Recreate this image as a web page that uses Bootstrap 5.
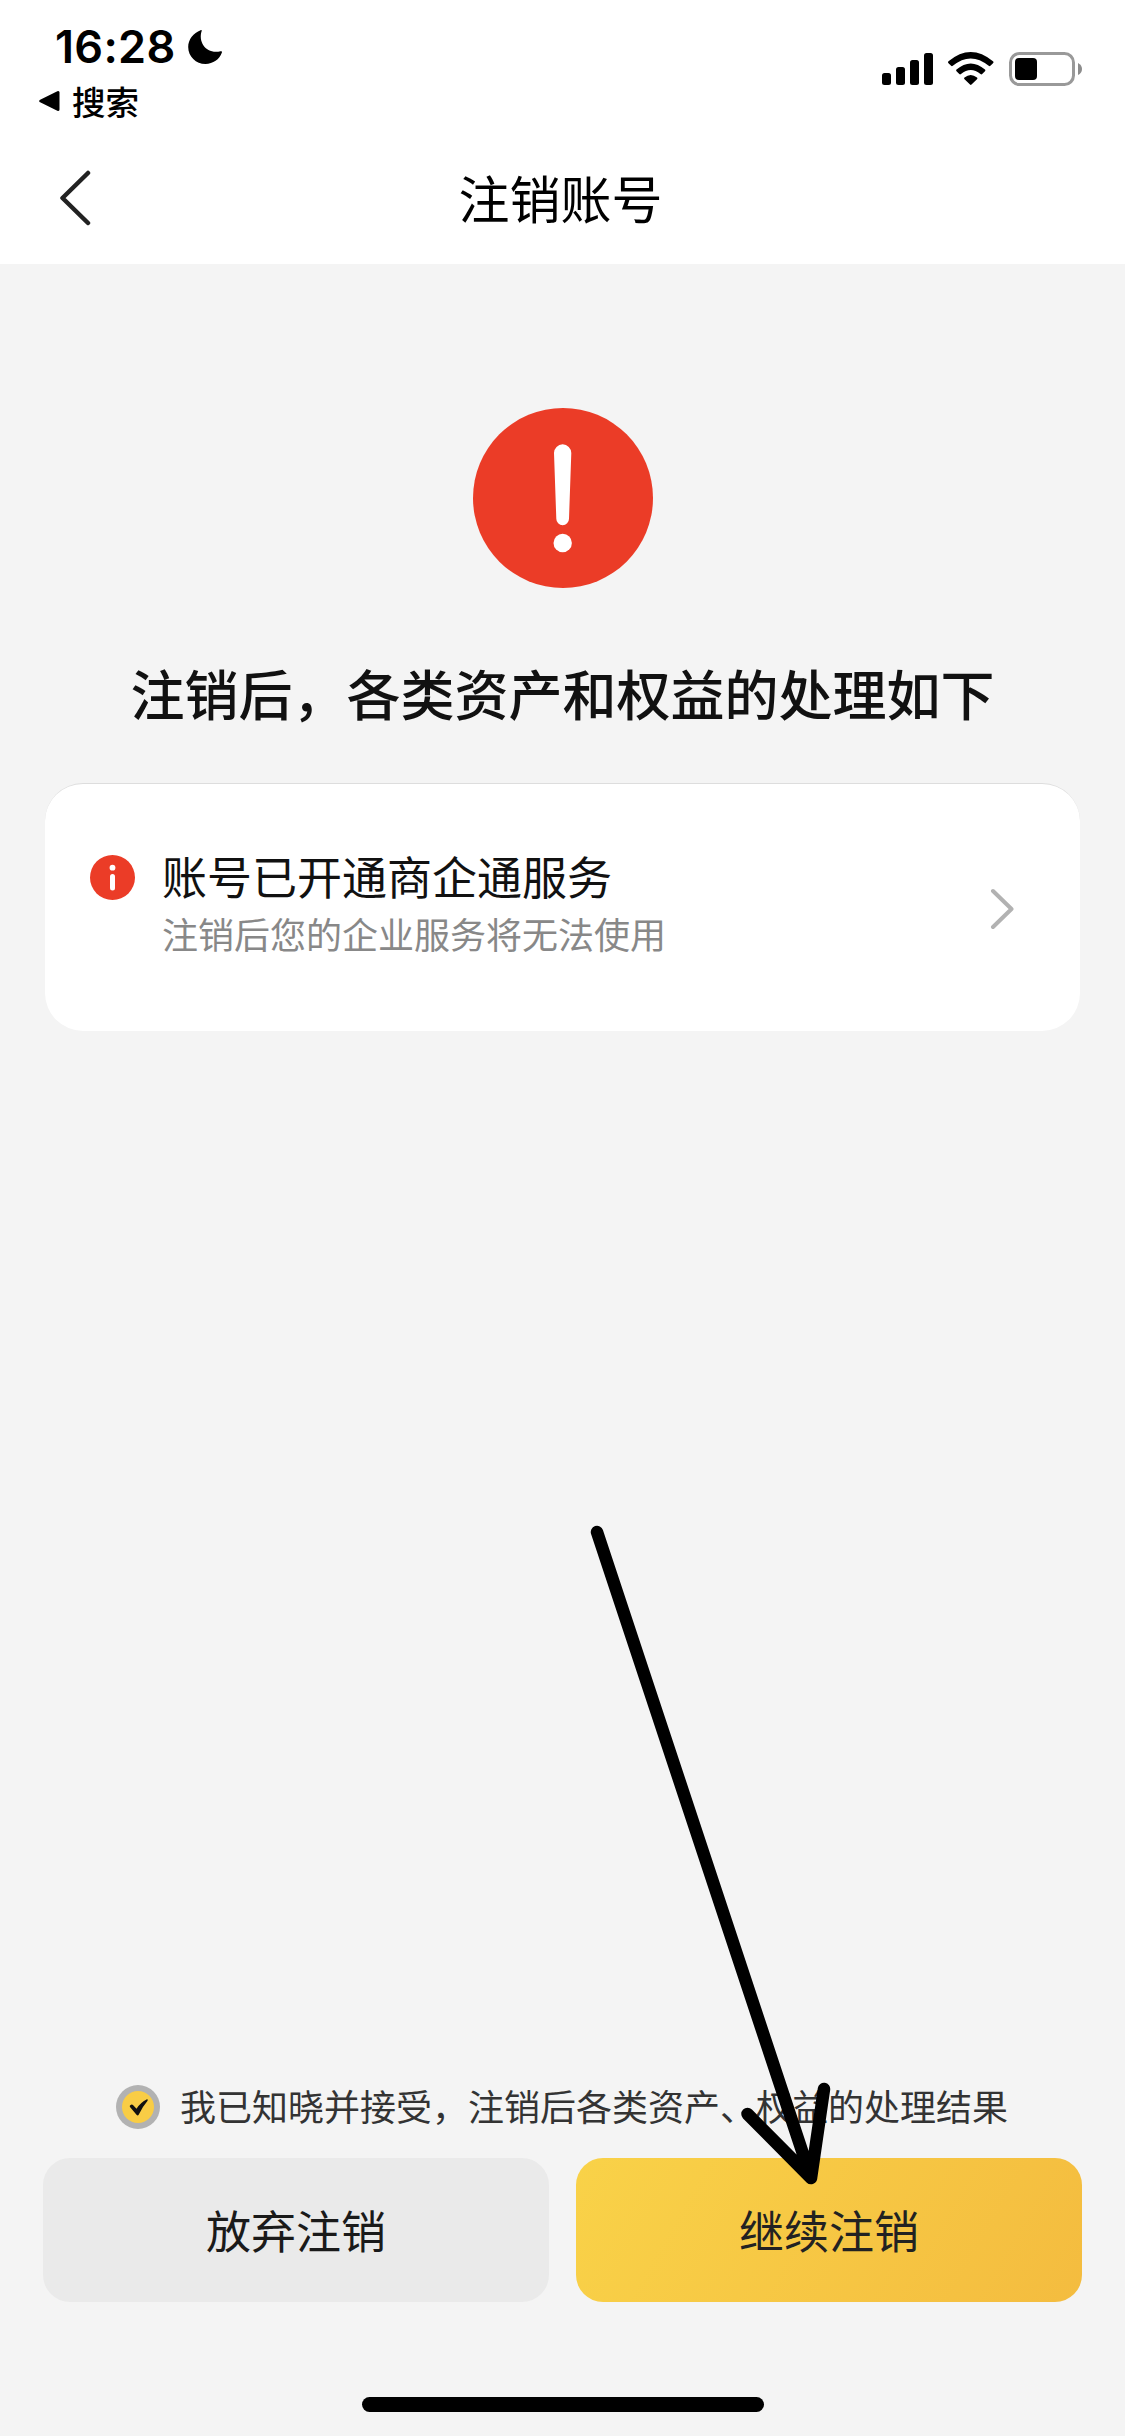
<!DOCTYPE html>
<html lang="zh-CN">
<head>
<meta charset="utf-8">
<meta name="viewport" content="width=device-width, initial-scale=1">
<title>注销账号</title>
<link rel="stylesheet" href="https://cdn.jsdelivr.net/npm/bootstrap@5.3.0/dist/css/bootstrap.min.css">
<style>
  body { font-family: "Noto Sans CJK SC", sans-serif; background: #f4f4f4; color: #111; }
  svg { display: block; flex: none; }
  .screen { width: 1125px; height: 2436px; overflow: hidden; }
  .top-area { height: 264px; color: #000; }
  .status-row { height: 132px; }
  .status-left { padding: 20px 0 0 39px; }
  .clock { font: 600 45px/54px Inter, sans-serif; padding-left: 16px; gap: 11px; }
  .clock-digits { letter-spacing: .3px; }
  .back-app { font-size: 33.5px; line-height: 50px; font-weight: 500; gap: 12px; margin-top: 2px; }
  .status-icons { padding: 52px 43px 0 0; }
  .title-row { height: 132px; padding: 0 60px 0 56px; }
  .page-title { font-size: 51px; line-height: 76px; font-weight: 400; padding-bottom: 3px; }
  .side-slot { width: 40px; }
  .warn-icon { margin-top: 144px; }
  .headline { font-size: 54px; line-height: 80px; font-weight: 500; margin-top: 65px; }
  .notice { width: 1035px; height: 248px; margin-top: 50px; border: 0; border-top: 1px solid #ddd; border-radius: 38px; padding: 0 66px 0 45px; }
  .notice-icon { margin-top: 71px; }
  .notice-text { margin: 58px 0 0 27px; }
  .notice-title { font-size: 45px; line-height: 67px; }
  .notice-sub { font-size: 36px; line-height: 48px; color: #888; }
  .notice-arrow { margin-top: 2px; }
  .agree { font-size: 36px; line-height: 54px; color: #333; gap: 20px; padding-left: 116px; margin-bottom: 24px; }
  .agree span { margin: -2px 0 2px; }
  .actions { padding: 0 43px 0 43px; gap: 27px; }
  .act { height: 144px; border: 0; border-radius: 27px; font-size: 45px; color: #1a1a1a; padding: 0; }
  .act-quit { background: #eaeaea; }
  .act-go { background: linear-gradient(120deg, #f9d248 0%, #f4bc3f 100%); color: #222; }
  .home-bar { width: 402px; height: 15px; border-radius: 8px; background: #000; margin: 95px auto 24px; }
  .pointer { left: 580px; top: 1515px; }
</style>
<script src="https://cdn.jsdelivr.net/npm/bootstrap@5.3.0/dist/js/bootstrap.bundle.min.js"></script>
</head>
<body>
<div class="screen position-relative d-flex flex-column">
  <header class="top-area bg-white">
    <div class="status-row d-flex justify-content-between align-items-start">
      <div class="status-left">
        <div class="clock d-flex align-items-center">
          <span class="clock-digits">16:28</span>
          <svg width="36" height="36" viewBox="0 0 36 36"><path d="M13.6 1.2C14.400 .9 15 1.400 14.600 2.300C11 13.500 19.500 25.500 33.500 22.300C34.600 22 35.300 22.600 34.900 23.600C32.500 30.500 26 35 18.500 35C9 35 1.200 27.500 1.200 18C1.200 10.500 6.500 3.800 13.600 1.200Z"/></svg>
        </div>
        <div class="back-app d-flex align-items-center">
          <svg width="21" height="22" viewBox="0 0 21 22"><path d="M1.800 11L19 2.500V19.500Z" stroke="#000" stroke-width="3" stroke-linejoin="round"/></svg>
          <span>搜索</span>
        </div>
      </div>
      <div class="status-icons d-flex">
        <svg width="200" height="34" viewBox="0 0 200 34">
          <rect x="0" y="21" width="9" height="12" rx="2.500"/><rect x="14" y="15" width="9" height="18" rx="2.500"/><rect x="28" y="8" width="9" height="25" rx="2.500"/><rect x="42" y="1" width="9" height="32" rx="2.500"/>
          <path d="M66.500 9.300Q88.700-9.300 111 9.300Q112 10.200 111 11.200L108.400 13.800Q107.600 14.500 106.700 13.800Q88.700-1 70.800 13.800Q69.900 14.500 69.100 13.800L66.500 11.200Q65.500 10.200 66.500 9.300Z"/>
          <path d="M74.500 17.500Q88.700 5.300 103 17.500Q103.900 18.300 103 19.200L100.200 22Q99.400 22.800 98.500 22Q88.700 14 79 22Q78.100 22.800 77.300 22L74.500 19.200Q73.600 18.300 74.500 17.500Z"/>
          <path d="M82.500 25.500Q88.700 20.300 95 25.500Q96 26.300 95 27.200L89.500 32.600Q88.700 33.300 88 32.600L82.500 27.200Q81.500 26.300 82.500 25.500Z"/>
          <rect x="128.500" y="1.500" width="63" height="31" rx="9" fill="none" stroke="#999" stroke-width="3"/>
          <rect x="133" y="6" width="22" height="22" rx="4"/>
          <path d="M196 11Q200 13 200 17T196 23Z" fill="#8c8c8c"/>
        </svg>
      </div>
    </div>
    <div class="title-row d-flex align-items-center justify-content-between">
      <div class="side-slot"><svg width="36" height="56" viewBox="0 0 36 56"><path d="M32 3L6.500 28L32 53" fill="none" stroke="#222" stroke-width="4.500" stroke-linecap="round" stroke-linejoin="round"/></svg></div>
      <h1 class="page-title m-0">注销账号</h1>
      <div class="side-slot"></div>
    </div>
  </header>

  <main class="flex-grow-1 d-flex flex-column align-items-center">
    <svg class="warn-icon" width="180" height="180" viewBox="0 0 180 180"><circle cx="90" cy="90" r="90" fill="#eb3c27"/><path d="M81 45A8.600 8.600 0 0 1 98.300 45L96 110.800A6.200 6.200 0 0 1 83.300 110.800Z" fill="#fff"/><circle cx="89.700" cy="135" r="9.200" fill="#fff"/></svg>
    <h2 class="headline mb-0 text-nowrap">注销后，各类资产和权益的处理如下</h2>
    <section class="card notice flex-row align-items-start">
      <svg class="notice-icon" width="45" height="45" viewBox="0 0 45 45"><circle cx="22.500" cy="22.500" r="22.500" fill="#eb3c27"/><circle cx="22.500" cy="12.700" r="2.900" fill="#fff"/><rect x="20" y="19" width="5" height="16.500" rx="2.500" fill="#fff"/></svg>
      <div class="notice-text flex-grow-1">
        <div class="notice-title">账号已开通商企通服务</div>
        <div class="notice-sub">注销后您的企业服务将无法使用</div>
      </div>
      <svg class="notice-arrow align-self-center" width="25" height="42" viewBox="0 0 25 42"><path d="M4 3L22.500 21L4 39" fill="none" stroke="#b2b2b2" stroke-width="4" stroke-linecap="round" stroke-linejoin="round"/></svg>
    </section>
  </main>

  <footer>
    <div class="agree d-flex align-items-center text-nowrap">
      <svg width="44" height="44" viewBox="0 0 44 44"><circle cx="22" cy="22" r="22" fill="#b2b2b2"/><circle cx="22" cy="22" r="16" fill="#f9cd45"/><path d="M14.300 20.300Q15.800 18.900 17.200 20.300L20.500 23.800Q24.500 17.500 31 14.300Q32 14.200 31.600 15.700Q26 22.300 22.800 29.500Q21.800 31.300 20.500 29.700L14 22Q13.300 21 14.300 20.300Z" fill="#111"/></svg>
      <span>我已知晓并接受，注销后各类资产、权益的处理结果</span>
    </div>
    <div class="actions d-flex">
      <button type="button" class="btn act act-quit flex-fill">放弃注销</button>
      <button type="button" class="btn act act-go flex-fill">继续注销</button>
    </div>
    <div class="home-bar"></div>
  </footer>

  <svg class="pointer position-absolute" width="270" height="680" viewBox="580 1515 270 680"><path d="M597 1532L811 2178M747.500 2114L811 2178L824 2089" fill="none" stroke="#000" stroke-width="12.500" stroke-linecap="round" stroke-linejoin="round"/></svg>
</div>
</body>
</html>
